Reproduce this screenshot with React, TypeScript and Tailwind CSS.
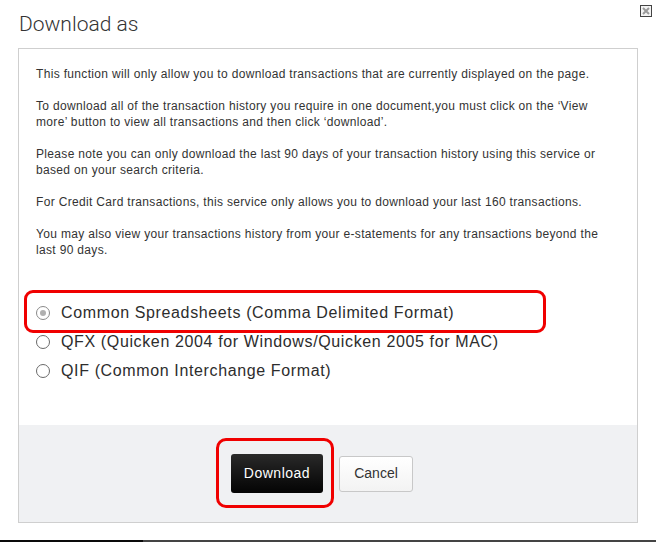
import React from "react";

const paras: string[][] = [
  ["This function will only allow you to download transactions that are currently displayed on the page."],
  [
    "To download all of the transaction history you require in one document,you must click on the \u2018View",
    "more\u2019 button to view all transactions and then click \u2018download\u2019.",
  ],
  [
    "Please note you can only download the last 90 days of your transaction history using this service or",
    "based on your search criteria.",
  ],
  ["For Credit Card transactions, this service only allows you to download your last 160 transactions."],
  [
    "You may also view your transactions history from your e-statements for any transactions beyond the",
    "last 90 days.",
  ],
];

const options = [
  "Common Spreadsheets (Comma Delimited Format)",
  "QFX (Quicken 2004 for Windows/Quicken 2005 for MAC)",
  "QIF (Common Interchange Format)",
];

function Radio({ checked }: { checked: boolean }) {
  return (
    <span
      className={
        "w-[14px] h-[14px] rounded-full border-[1.5px] bg-white flex items-center justify-center shrink-0 " +
        (checked ? "border-[#8a8a8a]" : "border-[#6a6a6a]")
      }
    >
      {checked && <span className="w-[6px] h-[6px] rounded-full bg-[#b0b0b0]" />}
    </span>
  );
}

export default function App() {
  return (
    <div className="relative w-[656px] h-[542px] bg-white text-[#333] font-['Liberation_Sans',Arial,sans-serif] overflow-hidden">
      <svg className="absolute left-[640px] top-[5px]" width="12" height="12" viewBox="0 0 12 12">
        <rect x="0.5" y="0.5" width="11" height="11" fill="#f4f4f4" stroke="#444" />
        <path d="M3 3 L9 9 M9 3 L3 9" stroke="#9a9a9a" strokeWidth="2" />
      </svg>
      <div className="h-[48px] pl-[19px] pt-[10px]">
        <h1 className="font-['Roboto',sans-serif] font-light text-[21px] leading-[28px] text-[#333]">Download as</h1>
      </div>
      <div className="relative ml-[18px] w-[620px] h-[475px] border border-[#cfcfcf] flex flex-col">
        <div className="flex-1 bg-white pl-[17px] pt-[17px]">
          <div className="flex flex-col gap-4 text-[12px] tracking-[0.33px] leading-[16px] text-[#333]">
            {paras.map((p, i) => (
              <p key={i}>
                {p.map((l, j) => (
                  <span key={j} className="block whitespace-nowrap">
                    {l}
                  </span>
                ))}
              </p>
            ))}
          </div>
          <div className="mt-[40px] flex flex-col">
            {options.map((o, i) => (
              <label key={o} className="h-[29px] flex items-center gap-[11px] text-[16px] tracking-[0.63px] text-[#2d2d2d]">
                <Radio checked={i === 0} />
                <span className="whitespace-nowrap">{o}</span>
              </label>
            ))}
          </div>
        </div>
        <div className="h-[97px] bg-[#f0f1f3] flex items-center pl-[212px] gap-[16px]">
          <div className="relative">
            <button className="w-[92px] h-[39px] rounded-[3px] bg-gradient-to-b from-[#2a2a2a] to-[#050505] text-white text-[14px] tracking-[0.5px]">
              Download
            </button>
            <span className="absolute -left-[15px] -top-[16px] w-[118px] h-[70px] rounded-[10px] border-[3px] border-[#f00000] pointer-events-none" />
          </div>
          <button className="w-[74px] h-[36px] rounded-[3px] border border-[#c8c8c8] bg-gradient-to-b from-white to-[#f3f3f3] text-[#333] text-[14px]">
            Cancel
          </button>
        </div>
        <span className="absolute left-[5px] top-[241px] w-[522px] h-[43px] rounded-[9px] border-[3px] border-[#f00000] pointer-events-none" />
      </div>
      <div className="absolute left-0 bottom-0 w-full h-[2px] flex">
        <div className="w-[143px] bg-[#0a0a0a]" />
        <div className="flex-1 bg-[#444]" />
      </div>
    </div>
  );
}
